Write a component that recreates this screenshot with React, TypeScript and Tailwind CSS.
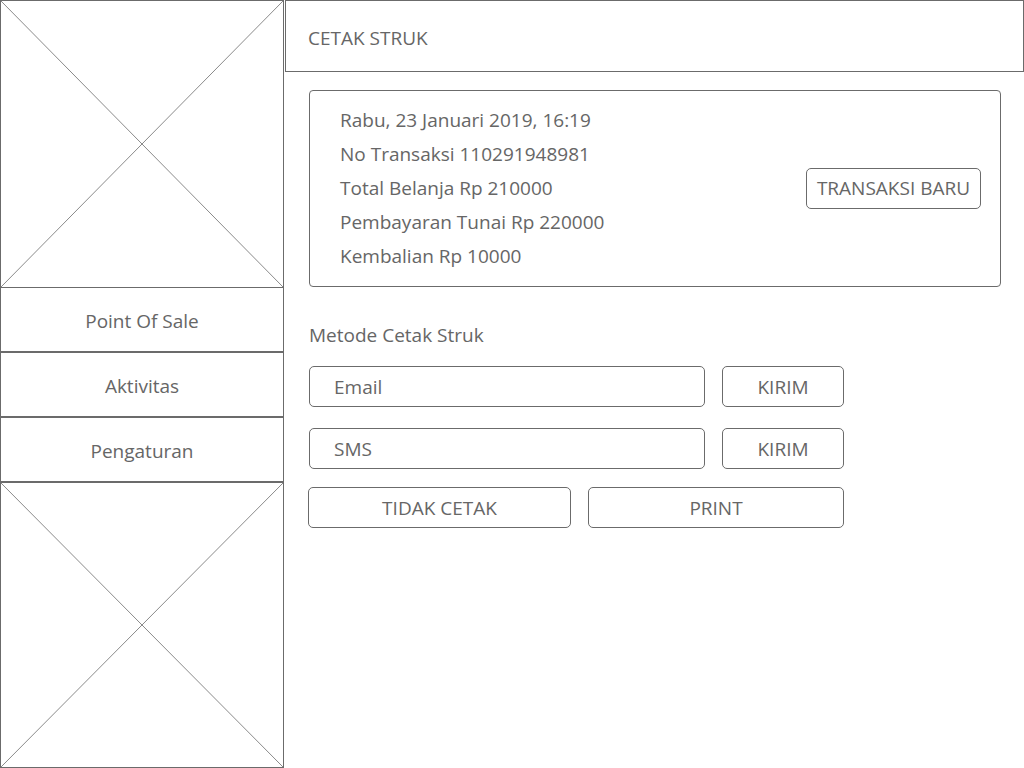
import React from "react";

const Placeholder: React.FC<{ className?: string }> = ({ className }) => (
  <div className={`relative border border-[#6b6b6b] ${className ?? ""}`}>
    <svg
      className="absolute inset-0 h-full w-full"
      preserveAspectRatio="none"
      viewBox="0 0 100 100"
    >
      <line x1="0" y1="0" x2="100" y2="100" stroke="#8a8a8a" strokeWidth="1" vectorEffect="non-scaling-stroke" />
      <line x1="100" y1="0" x2="0" y2="100" stroke="#8a8a8a" strokeWidth="1" vectorEffect="non-scaling-stroke" />
    </svg>
  </div>
);

const menu = ["Point Of Sale", "Aktivitas", "Pengaturan"];

const receipt = [
  "Rabu, 23 Januari 2019, 16:19",
  "No Transaksi 110291948981",
  "Total Belanja Rp 210000",
  "Pembayaran Tunai Rp 220000",
  "Kembalian Rp 10000",
];

const App: React.FC = () => {
  return (
    <div
      className="flex h-[768px] w-[1024px] bg-white text-[19px] text-[#666666]"
      style={{ fontFamily: '"Open Sans", "Noto Sans", sans-serif' }}
    >
      <aside className="flex w-[284px] flex-col">
        <Placeholder className="h-[288px]" />
        {menu.map((item) => (
          <div
            key={item}
            className="-mt-px flex h-[66px] items-center justify-center border-x border-b-2 border-t border-[#6b6b6b] pt-[4px]"
          >
            {item}
          </div>
        ))}
        <Placeholder className="-mt-px flex-1" />
      </aside>

      <main className="flex flex-1 flex-col pl-px">
        <header className="flex h-[72px] items-center border border-[#6b6b6b] pl-[22px] pt-[4px]">
          CETAK STRUK
        </header>

        <div className="pl-[24px] pr-[23px]">
          <section className="mt-[18px] flex h-[197px] items-center rounded-[4px] border border-[#6b6b6b] pb-[1px] pl-[30px] pr-[19px]">
            <div className="flex flex-1 flex-col gap-[8px] leading-[26px]">
              {receipt.map((line) => (
                <div key={line}>{line}</div>
              ))}
            </div>
            <button className="mt-[1px] h-[41px] rounded-[5px] border border-[#6b6b6b] px-[10px]">
              TRANSAKSI BARU
            </button>
          </section>

          <div className="mt-[35px] leading-[26px]">Metode Cetak Struk</div>

          <div className="mt-[18px] flex flex-col gap-[21px]">
            {["Email", "SMS"].map((label) => (
              <div key={label} className="flex gap-[17px]">
                <div className="flex h-[41px] w-[396px] items-center rounded-[5px] border border-[#6b6b6b] pl-[24px] pt-[2px]">
                  {label}
                </div>
                <button className="h-[41px] w-[122px] rounded-[5px] border border-[#6b6b6b] pt-[2px]">
                  KIRIM
                </button>
              </div>
            ))}
          </div>

          <div className="mt-[18px] flex gap-[17px]">
            <button className="-ml-px h-[41px] w-[263px] rounded-[5px] border border-[#6b6b6b] pt-[2px]">
              TIDAK CETAK
            </button>
            <button className="h-[41px] w-[256px] rounded-[5px] border border-[#6b6b6b] pt-[2px]">
              PRINT
            </button>
          </div>
        </div>
      </main>
    </div>
  );
};

export default App;
